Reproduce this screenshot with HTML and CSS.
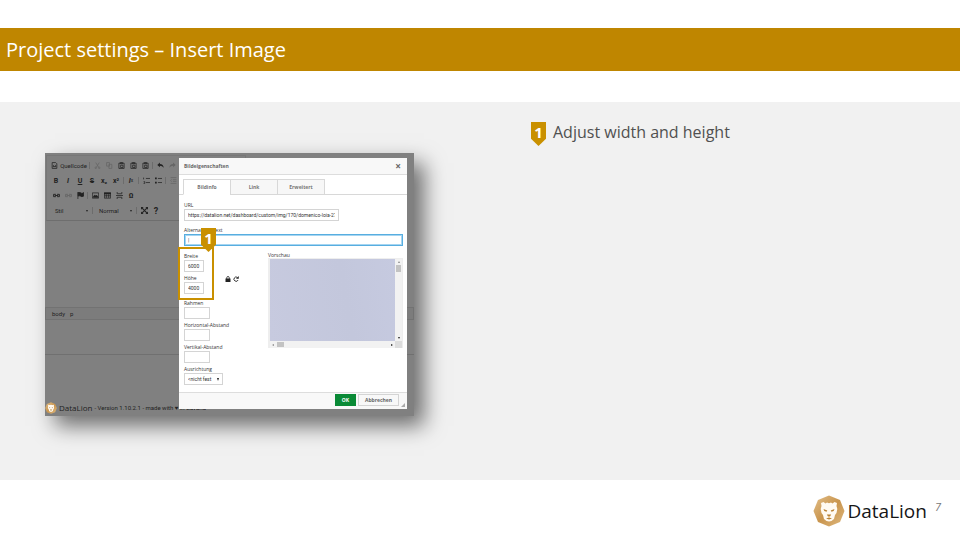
FILE: index.html
```html
<!DOCTYPE html>
<html lang="en">
<head>
<meta charset="utf-8">
<title>Project settings – Insert Image</title>
<link rel="stylesheet" href="styles.css">
</head>
<body>
<svg class="defs" aria-hidden="true">
  <linearGradient id="gold" x1="0" y1="0" x2="1" y2="1"><stop offset="0" stop-color="#e3c08a"/><stop offset=".5" stop-color="#c9954e"/><stop offset="1" stop-color="#dfb97f"/></linearGradient>
  <symbol id="lion" viewBox="0 0 32 32">
    <path d="M16 0.500L27 5L31.500 16L27 27L16 31.500L5 27L0.500 16L5 5Z" fill="url(#gold)"/>
    <path d="M8 8L10.500 7L12.500 8.500L14 7.500L16 8.300L18 7.500L19.500 8.500L21.500 7L24 8L23.500 11L24.300 14L23.500 18L22 20L21 24L18.500 26L16 26.500L13.500 26L11 24L10 20L8.500 18L7.700 14L8.500 11Z" fill="#fffaf2"/>
    <path d="M10.500 14L14.300 15.500L13.500 16.700L11.300 16ZM21.500 14L17.700 15.500L18.500 16.700L20.700 16ZM13.800 19.500H18.200L17 21.500H15ZM13 23.500L16 22.500L19 23.500L16 24.500Z" fill="#b98235"/>
    <path d="M16 21V23" stroke="#e2c08c" stroke-width=".7" fill="none"/>
  </symbol>
  <symbol id="source" viewBox="0 0 12 12"><path d="M2 11V1H8L10 3V11ZM3 8H9M5 5L4 6.500L5 8M7 5L8 6.500L7 8" /></symbol>
  <symbol id="cut" viewBox="0 0 12 12"><path d="M3 1L8 9M9 1L4 9"/><circle cx="3" cy="10" r="1.300"/><circle cx="9" cy="10" r="1.300"/></symbol>
  <symbol id="copy" viewBox="0 0 12 12"><path d="M1 1H6V7H1ZM5 4H10V11H5Z"/></symbol>
  <symbol id="paste" viewBox="0 0 12 12"><path d="M1.500 2H10.500V11H1.500ZM4 1H8V3H4ZM4.500 5.500H8.500V9.500H4.500Z" stroke-width="1.300"/></symbol>
  <symbol id="undo" viewBox="0 0 12 12"><path d="M0.500 5L5 1V3.500Q11 3.500 11.500 10Q9 6.500 5 6.500V9Z" fill="currentColor" stroke="none"/></symbol>
  <symbol id="redo" viewBox="0 0 12 12"><path d="M11.500 5L7 1V3.500Q1 3.500 .5 10Q3 6.500 7 6.500V9Z" fill="currentColor" stroke="none"/></symbol>
  <symbol id="list" viewBox="0 0 12 12"><path d="M5 2.500H12M5 9.500H12M1 1V4M1 8H3V11H1"/></symbol>
  <symbol id="bullets" viewBox="0 0 12 12"><path d="M5 2.500H12M5 9.500H12"/><path d="M0 1H3V4H0ZM0 8H3V11H0Z" fill="currentColor" stroke="none"/></symbol>
  <symbol id="indent" viewBox="0 0 12 12"><path d="M1 1H11M5 4.500H11M5 7.500H11M1 11H11M3 4L1 6L3 8"/></symbol>
  <symbol id="link" viewBox="0 0 12 12"><path d="M5 4H1V8H5M7 4H11V8H7M3 6H9" stroke-width="1.600"/></symbol>
  <symbol id="flag" viewBox="0 0 12 12"><path d="M1.500 0V12"/><path d="M2 1Q5-.5 7 2Q9 3 11.500 1V7Q8 9 6 7Q4 6 2 7Z" fill="currentColor"/></symbol>
  <symbol id="image" viewBox="0 0 12 12"><path d="M.6 1.500H11.400V10.500H.6Z"/><path d="M2 9L4.500 5L6.500 7L8 5.500L10.500 9Z" fill="currentColor"/></symbol>
  <symbol id="table" viewBox="0 0 12 12"><path d="M.6 1.500H11.400V10.500H.6ZM.6 6.500H11.400M4 4V10M8 4V10"/><path d="M0 1H12V4H0Z" fill="currentColor" stroke="none"/></symbol>
  <symbol id="rule" viewBox="0 0 12 12"><path d="M2 0V3H10V0M0 6H12M2 12V9H10V12"/></symbol>
  <symbol id="expand" viewBox="0 0 12 12"><path d="M2 2L10 10M10 2L2 10" stroke-width="1.800"/><path d="M0 0H4.500L0 4.500ZM12 0V4.500L7.500 0ZM0 12V7.500L4.500 12ZM12 12H7.500L12 7.500Z" fill="currentColor" stroke="none"/></symbol>
  <symbol id="lock" viewBox="0 0 12 12"><path d="M3.500 6V3.500Q3.500 1 6 1T8.500 3.500V6" stroke-width="1.600"/><path d="M1 5H11V12H1Z" fill="currentColor" stroke="none"/></symbol>
  <symbol id="reset" viewBox="0 0 12 12"><path d="M9 3A4.300 4.300 0 1 0 10.200 8" stroke-width="1.800"/><path d="M11.500 0V5.500H6Z" fill="currentColor" stroke="none"/></symbol>
</svg>

<header class="title-bar"><h1>Project settings – Insert Image</h1></header>

<main class="content">
  <section class="shot" aria-label="Image dialog">
    <div class="editor">
      <div class="toolbar">
        <div class="tools">
          <button class="tool wide"><svg><use href="#source"/></svg>Quellcode</button><i class="sep"></i>
          <button class="tool off" aria-label="Cut"><svg><use href="#cut"/></svg></button>
          <button class="tool off" aria-label="Copy"><svg><use href="#copy"/></svg></button>
          <button class="tool" aria-label="Paste"><svg><use href="#paste"/></svg></button>
          <button class="tool" aria-label="Paste text"><svg><use href="#paste"/></svg></button>
          <button class="tool" aria-label="Paste from Word"><svg><use href="#paste"/></svg></button><i class="sep"></i>
          <button class="tool" aria-label="Undo"><svg><use href="#undo"/></svg></button>
          <button class="tool off" aria-label="Redo"><svg><use href="#redo"/></svg></button>
        </div>
        <div class="tools">
          <button class="tool"><b>B</b></button>
          <button class="tool"><em>I</em></button>
          <button class="tool"><u>U</u></button>
          <button class="tool"><s>S</s></button>
          <button class="tool"><b>x₂</b></button>
          <button class="tool"><b>x²</b></button><i class="sep"></i>
          <button class="tool"><em>I</em><sub>x</sub></button><i class="sep"></i>
          <button class="tool" aria-label="Numbered list"><svg><use href="#list"/></svg></button>
          <button class="tool" aria-label="Bulleted list"><svg><use href="#bullets"/></svg></button><i class="sep"></i>
          <button class="tool off" aria-label="Indent"><svg><use href="#indent"/></svg></button>
        </div>
        <div class="tools">
          <button class="tool" aria-label="Link"><svg><use href="#link"/></svg></button>
          <button class="tool off" aria-label="Unlink"><svg><use href="#link"/></svg></button>
          <button class="tool" aria-label="Anchor"><svg><use href="#flag"/></svg></button><i class="sep"></i>
          <button class="tool" aria-label="Image"><svg><use href="#image"/></svg></button>
          <button class="tool" aria-label="Table"><svg><use href="#table"/></svg></button>
          <button class="tool" aria-label="Line"><svg><use href="#rule"/></svg></button>
          <button class="tool"><b>Ω</b></button>
        </div>
        <div class="tools">
          <button class="tool combo">Stil<span class="caret"></span></button><i class="sep"></i>
          <button class="tool combo">Normal<span class="caret"></span></button><i class="sep"></i>
          <button class="tool" aria-label="Maximize"><svg><use href="#expand"/></svg></button>
          <button class="tool help">?</button>
        </div>
      </div>
      <div class="canvas"></div>
      <div class="path"><span>body</span><span>p</span></div>
      <div class="below"></div>
      <div class="credits"><svg class="mini"><use href="#lion"/></svg><span class="mini-name">DataLion</span><span>- Version 1.10.2.1 - made with ♥ in Bavaria</span></div>
    </div>

    <form class="dialog">
      <div class="dialog-head"><span>Bildeigenschaften</span><button type="button" class="close" aria-label="Close">×</button></div>
      <div class="tabs"><button type="button" class="tab active">Bildinfo</button><button type="button" class="tab">Link</button><button type="button" class="tab">Erweitert</button></div>
      <div class="dialog-body">
        <div class="field url"><label for="url">URL</label><input id="url" value="https://datalion.net/dashboard/custom/img/170/domenico-loia-272"></div>
        <div class="field alt"><label for="alt">Alternativer Text</label><input id="alt" value="|"></div>
        <div class="split">
          <div class="sizes">
            <div class="pair">
              <div>
                <div class="field small"><label for="w">Breite</label><input id="w" value="6000"></div>
                <div class="field small"><label for="h">Höhe</label><input id="h" value="4000"></div>
              </div>
              <div class="locks"><svg><use href="#lock"/></svg><svg><use href="#reset"/></svg></div>
              <div class="marker"><span class="pin">1</span></div>
            </div>
            <div class="field mid"><label for="r">Rahmen</label><input id="r"></div>
            <div class="field mid"><label for="ha">Horizontal-Abstand</label><input id="ha"></div>
            <div class="field mid"><label for="va">Vertikal-Abstand</label><input id="va"></div>
            <div class="field align"><label for="al">Ausrichtung</label><div class="select"><select id="al"><option>&lt;nicht fest</option></select></div></div>
          </div>
          <div class="preview">
            <span>Vorschau</span>
            <div class="view">
              <div class="photo"></div>
              <div class="vbar"><i class="up"></i><b></b><i class="down"></i></div>
              <div class="hbar"><i class="left"></i><b></b><i class="right"></i></div>
              <div class="corner"></div>
            </div>
          </div>
        </div>
      </div>
      <div class="dialog-foot"><button type="button" class="ok">OK</button><button type="button" class="cancel">Abbrechen</button><i class="grip"></i></div>
    </form>
  </section>

  <ol class="notes">
    <li><span class="pin">1</span><span>Adjust width and height</span></li>
  </ol>
</main>

<footer class="foot">
  <svg class="logo"><use href="#lion"/></svg><span class="brand">DataLion</span><span class="page-no">7</span>
</footer>
</body>
</html>
```
FILE: styles.css
```css
* { box-sizing: border-box; }
body {
  margin: 0;
  padding-top: 28px;
  min-height: 100vh;
  display: flex;
  flex-direction: column;
  background: #fff;
  font-family: "Open Sans", "Noto Sans", sans-serif;
}
button, input, select { font: inherit; color: inherit; margin: 0; padding: 0; border: 0; background: none; border-radius: 0; }
.defs { position: absolute; width: 0; height: 0; }
svg { fill: none; stroke: currentColor; display: block; flex: none; }
.logo, .mini { stroke: none; }

.title-bar { background: #bf8600; color: #fff; padding: 0 6px; }
h1 { margin: 0; font-size: 20px; line-height: 43px; font-weight: 400; }

.content {
  flex: 1;
  margin-top: 31px;
  padding: 20px 0 64px 45px;
  background: #f1f1f1;
  display: grid;
  grid-template-columns: 369fr 429fr;
  column-gap: 117px;
  align-items: start;
}
.notes { list-style: none; margin: 0; padding: 0; color: #505050; font-size: 16px; line-height: 20px; }
.notes li { display: flex; gap: 7px; }
.pin {
  display: block;
  width: 15px;
  height: 24px;
  background: #c99000;
  clip-path: polygon(0 0, 100% 0, 100% 70%, 50% 100%, 0 70%);
  color: #fff;
  font: 700 15px/20px "Open Sans", sans-serif;
  text-align: center;
}

.shot {
  position: relative;
  margin-top: 31px;
  background: #808080;
  box-shadow: 10px 10px 20px rgba(0, 0, 0, .55);
  font: 5px/8px "Open Sans", sans-serif;
}
.editor { color: #222; display: flex; flex-direction: column; height: 263px; overflow: hidden; font-family: Roboto, sans-serif; }
.toolbar { padding: 2px 3px; margin: 2px 168px 0 1px; border: 1px solid #777; border-bottom-color: #6e6e6e; }
.tools { display: flex; align-items: center; height: 15px; white-space: nowrap; }
.tool { width: 12px; height: 12px; flex: none; display: flex; align-items: center; justify-content: center; font-size: 7px; line-height: 12px; }
.tool svg { width: 7px; height: 7px; stroke-width: 1.300; }
.tool sub { font-size: 5px; line-height: 5px; vertical-align: baseline; }
.tool.wide { width: 38px; gap: 2px; font-size: 6px; }
.tool.off { color: #666; }
.tool em, .tool u, .tool s { font-weight: 700; }
.tool.combo { width: 41px; justify-content: space-between; padding: 0 3px 0 5px; font-size: 6px; }
.tool.help { font-size: 9px; font-weight: 700; }
.caret { border: 1px solid transparent; border-top: 2px solid #222; border-bottom: 0; }
.sep { width: 1px; height: 7px; margin: 0 1px; background: #6c6c6c; flex: none; }
.canvas { flex: 1; }
.path { height: 13px; border: 1px solid #727272; background: #7c7c7c; display: flex; align-items: center; gap: 5px; padding-left: 6px; font-size: 6px; }
.below { height: 35px; border-bottom: 1px solid #707070; }
.credits { margin-top: 46px; height: 15px; padding-bottom: 2px; display: flex; align-items: center; gap: 2px; white-space: nowrap; font: 6px/8px Roboto, sans-serif; }
.mini { width: 12px; height: 12px; }
.mini-name { font: 8px/8px "Open Sans", sans-serif; }

.dialog { position: absolute; top: 5px; right: 7px; bottom: 7px; width: 228px; background: #fff; color: #333; display: flex; flex-direction: column; }
.dialog-head { height: 17px; padding: 0 5px; display: flex; align-items: center; justify-content: space-between; background: #f8f8f8; border-bottom: 1px solid #ddd; font-weight: 700; color: #666; }
.close { font-size: 10px; line-height: 12px; width: 8px; font-weight: 700; }
.tabs { display: flex; height: 20px; padding: 4px 0 0 4px; border-bottom: 1px solid #d8d8d8; flex: none; }
.tab { width: 48px; height: 16px; margin-right: -1px; border: 1px solid #d8d8d8; background: #f7f7f7; font-weight: 700; color: #777; }
.tab.active { background: #fff; border-bottom-color: #fff; }
.dialog-body { flex: 1; padding: 6px 4px 0 5px; }
.field { display: flex; flex-direction: column; margin-bottom: 2px; }
.field label { height: 8px; line-height: 8px; white-space: nowrap; }
.field input, .select { height: 12px; border: 1px solid #d4d4d4; background: #fff; padding: 0 3px; font: 5px/10px Roboto, sans-serif; min-width: 0; }
.url { width: 155px; margin-bottom: 5px; }
.alt { margin-bottom: 6px; }
.alt input { border-color: #58aee0; outline: 1px solid #a6d5f1; outline-offset: -2px; }
.small { width: 20px; }
.mid { width: 26px; }
.align { width: 39px; }
.select { position: relative; }
.select::after { content: ""; position: absolute; right: 3px; top: 4px; border: 1px solid transparent; border-top: 3px solid #222; border-bottom: 0; }
.select select { appearance: none; display: block; width: 100%; height: 10px; }
.split { display: flex; }
.sizes { width: 84px; }
.pair { position: relative; display: flex; gap: 21px; margin-bottom: 3px; }
.locks { display: flex; align-items: center; gap: 2px; padding-top: 10px; color: #222; }
.locks svg { width: 6px; height: 6px; }
.marker { position: absolute; left: -6px; top: -5px; width: 36px; height: 53px; border: 2px solid #c99000; }
.marker .pin { position: absolute; right: -4px; top: -21px; }
.preview { flex: 1; }
.preview span { display: block; height: 6px; line-height: 6px; }
.view { height: 90px; padding: 1px 1px 0 2px; background: #eee; display: grid; grid-template: 1fr 7px / 1fr 7px; }
.photo { background: linear-gradient(80deg, #c7cadf, #c3c7dc 60%, #c6cae0); }
.vbar, .hbar { background: #f2f2f2; display: flex; align-items: center; justify-content: space-between; padding: 2px 1px; }
.vbar { flex-direction: column; }
.hbar { padding: 1px 2px; }
.vbar b { width: 5px; height: 7px; margin: 2px 0 auto; background: #c3c3c3; }
.hbar b { width: 7px; height: 5px; margin: 0 auto 0 3px; background: #c3c3c3; }
.view i { border: 1px solid transparent; }
.view .up { border-bottom: 2px solid #888; border-top: 0; }
.view .down { border-top: 2px solid #222; border-bottom: 0; }
.view .left { border-right: 2px solid #888; border-left: 0; }
.view .right { border-left: 2px solid #222; border-right: 0; }
.corner { background: #ddd; }
.dialog-foot { height: 17px; display: flex; gap: 2px; justify-content: flex-end; padding: 1px 2px 0; border-top: 1px solid #ddd; background: #f8f8f8; font-weight: 700; }
.dialog-foot button { height: 12px; font-weight: 700; }
.ok { width: 21px; background: #0a8a36; color: #fff; }
.dialog-foot .cancel { width: 41px; border: 1px solid #d4d4d4; color: #666; }
.grip { align-self: flex-end; width: 4px; height: 4px; margin-bottom: 2px; background: #aaa; clip-path: polygon(100% 0, 100% 100%, 0 100%); }

.foot { height: 60px; padding: 2px 19px 0 0; display: flex; align-items: center; justify-content: flex-end; gap: 2px; color: #161616; }
.logo { width: 32px; height: 32px; }
.brand { font-size: 19px; line-height: 30px; }
.page-no { align-self: flex-start; padding: 18px 0 0 6px; font-size: 11px; line-height: 14px; font-style: italic; color: #777; }
```
